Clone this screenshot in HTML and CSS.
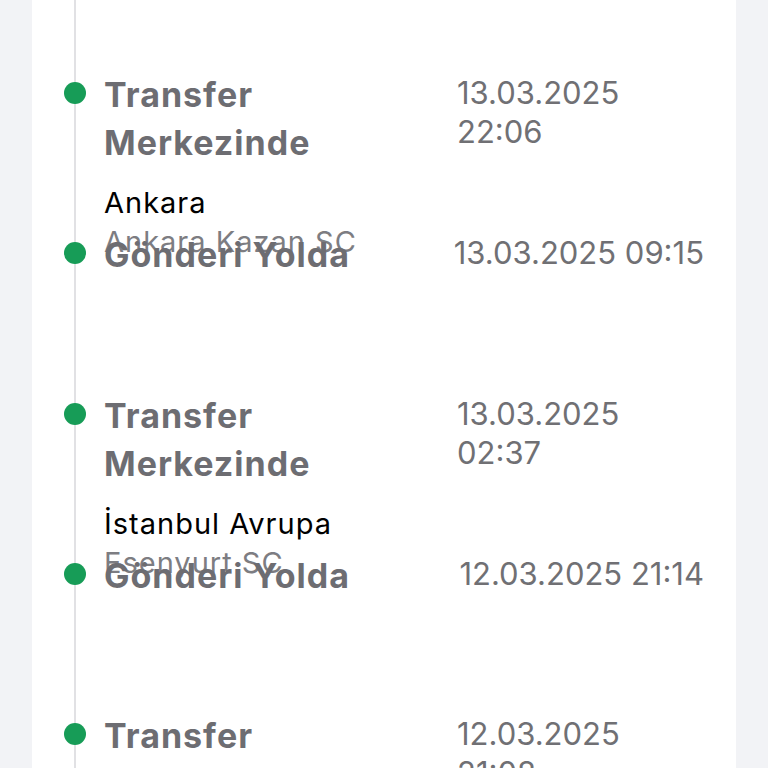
FILE: index.html
```html
<!DOCTYPE html>
<html>
<head lang="tr">
    <meta charset="UTF-8">
    <title>Gönderi Hareketleri</title>
    <link rel="stylesheet" href="styles.css">
</head>
<body>
<div id="page">
    <div id="card">
        <ul class="timeline">
            <li class="event">
                <span class="dot"></span>
                <div class="event-body">
                    <div class="event-head">
                        <h3 class="event-title">Transfer Merkezinde</h3>
                        <span class="event-date stacked">13.03.2025 22:06</span>
                    </div>
                    <div class="event-place">
                        <p class="place-city">Ankara</p>
                        <p class="place-branch">Ankara Kazan SC</p>
                    </div>
                </div>
            </li>
            <li class="event">
                <span class="dot"></span>
                <div class="event-body">
                    <div class="event-head">
                        <h3 class="event-title">Gönderi Yolda</h3>
                        <span class="event-date">13.03.2025 09:15</span>
                    </div>
                </div>
            </li>
            <li class="event">
                <span class="dot"></span>
                <div class="event-body">
                    <div class="event-head">
                        <h3 class="event-title">Transfer Merkezinde</h3>
                        <span class="event-date stacked">13.03.2025 02:37</span>
                    </div>
                    <div class="event-place">
                        <p class="place-city">İstanbul Avrupa</p>
                        <p class="place-branch">Esenyurt SC</p>
                    </div>
                </div>
            </li>
            <li class="event">
                <span class="dot"></span>
                <div class="event-body">
                    <div class="event-head">
                        <h3 class="event-title">Gönderi Yolda</h3>
                        <span class="event-date">12.03.2025 21:14</span>
                    </div>
                </div>
            </li>
            <li class="event">
                <span class="dot"></span>
                <div class="event-body">
                    <div class="event-head">
                        <h3 class="event-title">Transfer Merkezinde</h3>
                        <span class="event-date stacked">12.03.2025 21:08</span>
                    </div>
                    <div class="event-place">
                        <p class="place-city">İstanbul Avrupa</p>
                        <p class="place-branch">Esenyurt SC</p>
                    </div>
                </div>
            </li>
        </ul>
    </div>
</div>
</body>
</html>
```

FILE: styles.css
```css
*{
    padding: 0;
    margin: 0;
    box-sizing: border-box;
}
ul,ol{
    list-style: none;
}
html,body{
    height: 100%;
    overflow: hidden;
}
body{
    background-color: #f2f3f6;
    font-family: Inter, "Noto Sans", sans-serif;
}
#page{
    height: 100%;
    padding: 0 32px;
}
#card{
    height: 100%;
    background-color: #ffffff;
    padding: 0 32px 0 42px;
    overflow: hidden;
}
.timeline{
    border-left: 2px solid #e1e1e4;
    padding-top: 71px;
    min-height: 100%;
}
.event{
    display: flex;
    align-items: flex-start;
    height: 160.3px;
}
.dot{
    flex: none;
    width: 22px;
    height: 22px;
    border-radius: 50%;
    background-color: #179c57;
    margin: 11px 18px 0 -12px;
}
.event-body{
    flex: 1;
    min-width: 0;
}
.event-head{
    display: flex;
    align-items: flex-start;
    gap: 16px;
}
.event-title{
    flex: 1 1 0;
    font-size: 34px;
    line-height: 48px;
    font-weight: 700;
    letter-spacing: 1px;
    color: #6d6d72;
}
.event-date{
    flex: none;
    margin-top: 2px;
    font-size: 31px;
    line-height: 39px;
    color: #707074;
}
/* date + time don't fit next to a two line title */
.event-date.stacked{
    width: 247px;
}
.event-place{
    margin-top: 16px;
    font-size: 29px;
    line-height: 39px;
    letter-spacing: 1px;
}
.place-city{
    color: #000000;
}
.place-branch{
    color: #7d7d82;
}
```
